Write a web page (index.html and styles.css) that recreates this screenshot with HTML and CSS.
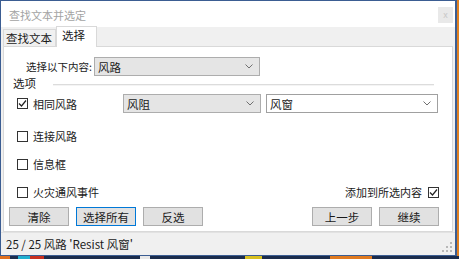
FILE: index.html
```html
<!DOCTYPE html>
<html lang="zh-CN">
<head>
    <meta charset="UTF-8">
    <title>查找文本并选定</title>
    <link rel="stylesheet" href="styles.css">
</head>
<body>
    <div class="desktop">
        <div class="dialog">
            <div class="titlebar">
                <span class="title">查找文本并选定</span>
                <span class="close">x</span>
            </div>

            <div class="tabs">
                <div class="tab">查找文本</div>
                <div class="tab active">选择</div>
            </div>

            <div class="panel">
                <div class="select-row">
                    <span class="select-label">选择以下内容:</span>
                    <div class="combo combo-main">
                        <span>风路</span>
                        <svg class="chev" width="8" height="5" viewBox="0 0 8 5"><polyline points="0.5,0.5 4,4 7.5,0.5" fill="none" stroke="#707070" stroke-width="1"/></svg>
                    </div>
                </div>

                <div class="group-head">
                    <span class="group-label">选项</span>
                    <div class="group-line"></div>
                </div>

                <div class="opt-row first">
                    <label class="check"><span class="box checked"><svg width="9" height="9" viewBox="0 0 9 9"><polyline points="1,4.5 3.5,7 8,1.5" fill="none" stroke="#222" stroke-width="1.2"/></svg></span>相同风路</label>
                    <div class="combo combo-param">
                        <span>风阻</span>
                        <svg class="chev" width="8" height="5" viewBox="0 0 8 5"><polyline points="0.5,0.5 4,4 7.5,0.5" fill="none" stroke="#707070" stroke-width="1"/></svg>
                    </div>
                    <div class="combo combo-value">
                        <span>风窗</span>
                        <svg class="chev" width="8" height="5" viewBox="0 0 8 5"><polyline points="0.5,0.5 4,4 7.5,0.5" fill="none" stroke="#707070" stroke-width="1"/></svg>
                    </div>
                </div>

                <div class="opt-row second">
                    <label class="check"><span class="box"></span>连接风路</label>
                </div>

                <div class="opt-row">
                    <label class="check"><span class="box"></span>信息框</label>
                </div>

                <div class="opt-row">
                    <label class="check"><span class="box"></span>火灾通风事件</label>
                    <label class="check right">添加到所选内容<span class="box checked"><svg width="9" height="9" viewBox="0 0 9 9"><polyline points="1,4.5 3.5,7 8,1.5" fill="none" stroke="#222" stroke-width="1.2"/></svg></span></label>
                </div>

                <div class="button-row">
                    <button>清除</button>
                    <button class="focus">选择所有</button>
                    <button>反选</button>
                    <span class="spacer"></span>
                    <button>上一步</button>
                    <button>继续</button>
                </div>
            </div>

            <div class="statusbar">
                <span>25 / 25 风路 'Resist 风窗'</span>
                <svg class="grip" width="12" height="12" viewBox="0 0 12 12">
                    <rect x="9" y="1" width="2" height="2" fill="#b8b8b8"/>
                    <rect x="5" y="5" width="2" height="2" fill="#b8b8b8"/>
                    <rect x="9" y="5" width="2" height="2" fill="#b8b8b8"/>
                    <rect x="1" y="9" width="2" height="2" fill="#b8b8b8"/>
                    <rect x="5" y="9" width="2" height="2" fill="#b8b8b8"/>
                    <rect x="9" y="9" width="2" height="2" fill="#b8b8b8"/>
                </svg>
            </div>
        </div>
    </div>
</body>
</html>
```
FILE: styles.css
```css
body {
    margin: 0;
    font-family: "Noto Sans CJK SC", "Liberation Sans", sans-serif;
    font-size: 11px;
    color: #1a1a1a;
}
.desktop {
    width: 459px;
    height: 259px;
    overflow: hidden;
    background:
        linear-gradient(to right, #e07020 0 10px, #1b2c4c 10px 18px, #20b0d0 18px 30px, #c83020 30px 44px, #1b2c4c 44px 140px, #e8e8e8 140px 150px, #1b2c4c 150px 245px, #d8c020 245px 262px, #1b2c4c 262px 330px, #e07a20 330px 372px, #1b2c4c 372px);
}
.dialog {
    width: 454px;
    height: 254px;
    border: 1px solid #3b5d92;
    border-right-width: 2px;
    background: #f0f0f0;
    display: flex;
    flex-direction: column;
    box-shadow: 2px 0 0 #e08020;
}
.titlebar {
    height: 26px;
    background: #fff;
    display: flex;
    align-items: center;
    padding: 0 2px 0 8px;
}
.title {
    color: #a3a3a3;
    font-size: 11px;
    flex: 1;
    margin-top: 2px;
}
.close {
    width: 15px;
    height: 16px;
    background: #e9e9e9;
    color: #c8c8c8;
    font-size: 9px;
    text-align: center;
    line-height: 15px;
    margin-top: 2px;
}
.tabs {
    height: 19px;
    display: flex;
    align-items: flex-end;
    padding-left: 2px;
}
.tab {
    height: 17px;
    line-height: 16px;
    padding: 0 2px;
    border: 1px solid #d9d9d9;
    border-bottom: none;
    background: #f0f0f0;
    box-sizing: border-box;
    width: 53px;
    font-size: 11.5px;
    white-space: nowrap;
}
.tab.active {
    height: 21px;
    width: 41px;
    background: #fff;
    margin-bottom: -1px;
    position: relative;
    z-index: 1;
    padding-left: 5px;
    line-height: 17px;
}
.panel {
    margin: 0 2px;
    height: 186px;
    box-sizing: border-box;
    border: 1px solid #d9d9d9;
    background: #fff;
    display: flex;
    flex-direction: column;
}
.select-row {
    display: flex;
    align-items: center;
    margin-top: 10px;
    padding-left: 22px;
    height: 19px;
}
.select-label {
    width: 68px;
    flex-shrink: 0;
    white-space: nowrap;
    font-size: 10.5px;
}
.combo {
    height: 19px;
    flex-shrink: 0;
    box-sizing: border-box;
    border: 1px solid #adadad;
    background: #e5e5e5;
    display: flex;
    align-items: center;
    justify-content: space-between;
    padding: 0 6px 0 3px;
    font-size: 11.5px;
}
.combo-main {
    width: 166px;
}
.combo-param {
    width: 138px;
    margin-left: 13px;
}
.combo-value {
    width: 172px;
    margin-left: 5px;
    background: #fff;
    border-color: #a0a0a0;
}
.group-head {
    display: flex;
    align-items: center;
    height: 14px;
    padding-left: 9px;
}
.group-label {
    width: 40px;
    font-size: 11.5px;
}
.group-line {
    flex: 1;
    margin: 3px 18px 0 0;
    border-top: 1px solid #dcdcdc;
    border-bottom: 1px solid #f4f4f4;
}
.opt-row {
    display: flex;
    align-items: center;
    height: 20px;
    margin-top: 8px;
    padding: 0 13px;
}
.opt-row.first {
    margin-top: 4px;
    height: 19px;
}
.opt-row.second {
    margin-top: 13px;
}
.check {
    display: flex;
    align-items: center;
    gap: 5px;
    font-size: 11px;
    width: 93px;
    flex-shrink: 0;
    white-space: nowrap;
}
.check.right {
    width: auto;
    margin-left: auto;
    gap: 6px;
}
.box {
    width: 11px;
    height: 11px;
    box-sizing: border-box;
    border: 1px solid #333;
    background: #fff;
    display: flex;
    align-items: center;
    justify-content: center;
}
.button-row {
    display: flex;
    gap: 7px;
    margin-top: 5px;
    padding: 0 13px 0 5px;
}
.spacer {
    flex: 1;
}
button {
    width: 60px;
    height: 19px;
    padding: 0;
    border: 1px solid #adadad;
    background: #e1e1e1;
    font-family: inherit;
    font-size: 11.5px;
    color: #1a1a1a;
    line-height: 16px;
}
button.focus {
    border-color: #0078d7;
}
.statusbar {
    flex: 1;
    border-top: 1px solid #e2e2e2;
    display: flex;
    align-items: center;
    justify-content: space-between;
    padding: 0 2px 0 5px;
    font-size: 11.5px;
}
.grip {
    align-self: flex-end;
    margin-bottom: 2px;
}
```
